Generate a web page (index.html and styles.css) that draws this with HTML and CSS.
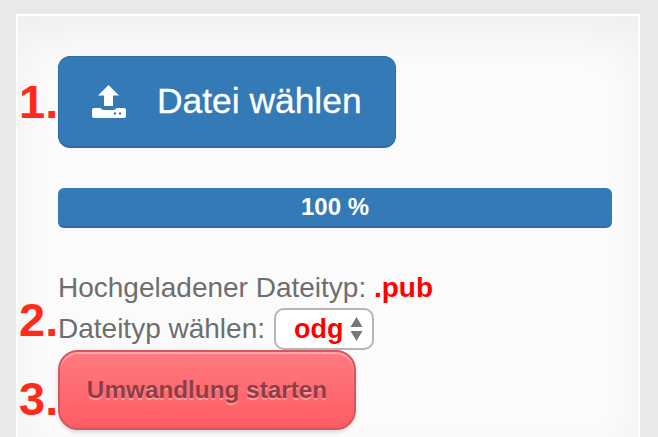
FILE: index.html
```html
<!DOCTYPE html>
<html lang="de">
<head>
    <meta charset="UTF-8">
    <meta name="viewport" content="width=device-width, initial-scale=1.0">
    <title>Datei umwandeln</title>
    <link rel="stylesheet" href="styles.css">
</head>
<body>

    <div class="panel">
        <button class="upload-btn">
            <svg class="upload-icon" width="34" height="33" viewBox="0 0 34 33">
                <path d="M16.5 0 L27 10.5 L21 10.5 L21 21 L12 21 L12 10.5 L6 10.5 Z" fill="#fff"/>
                <path d="M2 23 L8.5 23 Q9.5 25 12 25 L21 25 Q23.5 25 24.5 23 L32 23 Q34 23 34 25 L34 31 Q34 33 32 33 L2 33 Q0 33 0 31 L0 25 Q0 23 2 23 Z" fill="#fff"/>
                <circle cx="23" cy="28.5" r="1.2" fill="#337ab7"/>
                <circle cx="28" cy="28.5" r="1.2" fill="#337ab7"/>
            </svg>
            <span>Datei wählen</span>
        </button>

        <div class="progress">100 %</div>

        <div class="info-line">Hochgeladener Dateityp: <b class="red">.pub</b></div>
        <div class="info-line choose">
            <span>Dateityp wählen:</span>
            <div class="select-box">
                <span class="red">odg</span>
                <svg width="13" height="30" viewBox="0 0 13 30">
                    <path d="M6.5 3 L12.5 13 L0.5 13 Z" fill="#777"/>
                    <path d="M6.5 27 L12.5 17 L0.5 17 Z" fill="#777"/>
                </svg>
            </div>
        </div>
        <button class="start-btn">Umwandlung starten</button>

        <!-- Schritt-Nummern -->
        <span class="step step-1">1.</span>
        <span class="step step-2">2.</span>
        <span class="step step-3">3.</span>
    </div>

</body>
</html>
```

FILE: styles.css
```css
html, body {
    margin: 0;
    height: 100%;
    overflow: hidden;
}

body {
    background-color: #e8e9eb;
    font-family: "Liberation Sans", Arial, sans-serif;
}

.panel {
    position: relative;
    box-sizing: border-box;
    width: 624px;
    height: 423px;
    margin: 14px 0 0 16px;
    padding: 40px 26px 0 40px;
    background-color: #fbfbfb;
    border: 2px solid #fff;
    border-bottom: 0;
    box-shadow: inset 0 20px 40px rgba(0, 0, 0, 0.05);
}

.upload-btn {
    display: flex;
    align-items: center;
    box-sizing: border-box;
    width: 338px;
    height: 92px;
    padding: 0 0 0 33px;
    background-color: #337ab7;
    border: 1px solid #2e6da4;
    border-bottom-width: 2px;
    border-radius: 12px;
    color: #fff;
    font: 35.4px "Liberation Sans", Arial, sans-serif;
    -webkit-text-stroke: 0.3px #fff;
}

.upload-icon {
    margin-right: 31px;
}

.progress {
    box-sizing: border-box;
    height: 40px;
    margin-top: 40px;
    background-color: #337ab7;
    border-bottom: 2px solid #2e6da4;
    border-radius: 6px;
    color: #fff;
    font-size: 24px;
    font-weight: bold;
    line-height: 38px;
    text-align: center;
}

.info-line {
    color: #6e6e6e;
    font-size: 28px;
    line-height: 30px;
}

.progress + .info-line {
    margin-top: 45px;
}

.choose {
    display: flex;
    align-items: center;
    gap: 9px;
    height: 42px;
    margin-top: 5px;
}

.red {
    color: #f00;
    font-weight: bold;
}

.select-box {
    display: flex;
    align-items: center;
    justify-content: space-between;
    box-sizing: border-box;
    width: 100px;
    height: 42px;
    padding: 0 9px 0 18px;
    background-color: #fff;
    border: 2px solid #b5b5b5;
    border-radius: 10px;
    font-size: 27px;
}

.start-btn {
    display: block;
    box-sizing: border-box;
    width: 298px;
    height: 80px;
    padding: 0;
    background: linear-gradient(to bottom, #ff7a7f, #fd5c62);
    border: 2px solid #d2575f;
    border-radius: 20px;
    box-shadow: inset 0 2px 1px rgba(255, 255, 255, 0.35), 0 2px 4px rgba(0, 0, 0, 0.15);
    color: #8f3d47;
    font: bold 24.3px "Liberation Sans", Arial, sans-serif;
    text-shadow: 0 2px 1px rgba(255, 255, 255, 0.35);
}

.step {
    position: absolute;
    left: 1px;
    color: #ff2a1a;
    font-size: 47px;
    font-weight: bold;
    line-height: 50px;
}

.step-1 {
    top: 61px;
}

.step-2 {
    top: 279px;
}

.step-3 {
    top: 358px;
}
```
